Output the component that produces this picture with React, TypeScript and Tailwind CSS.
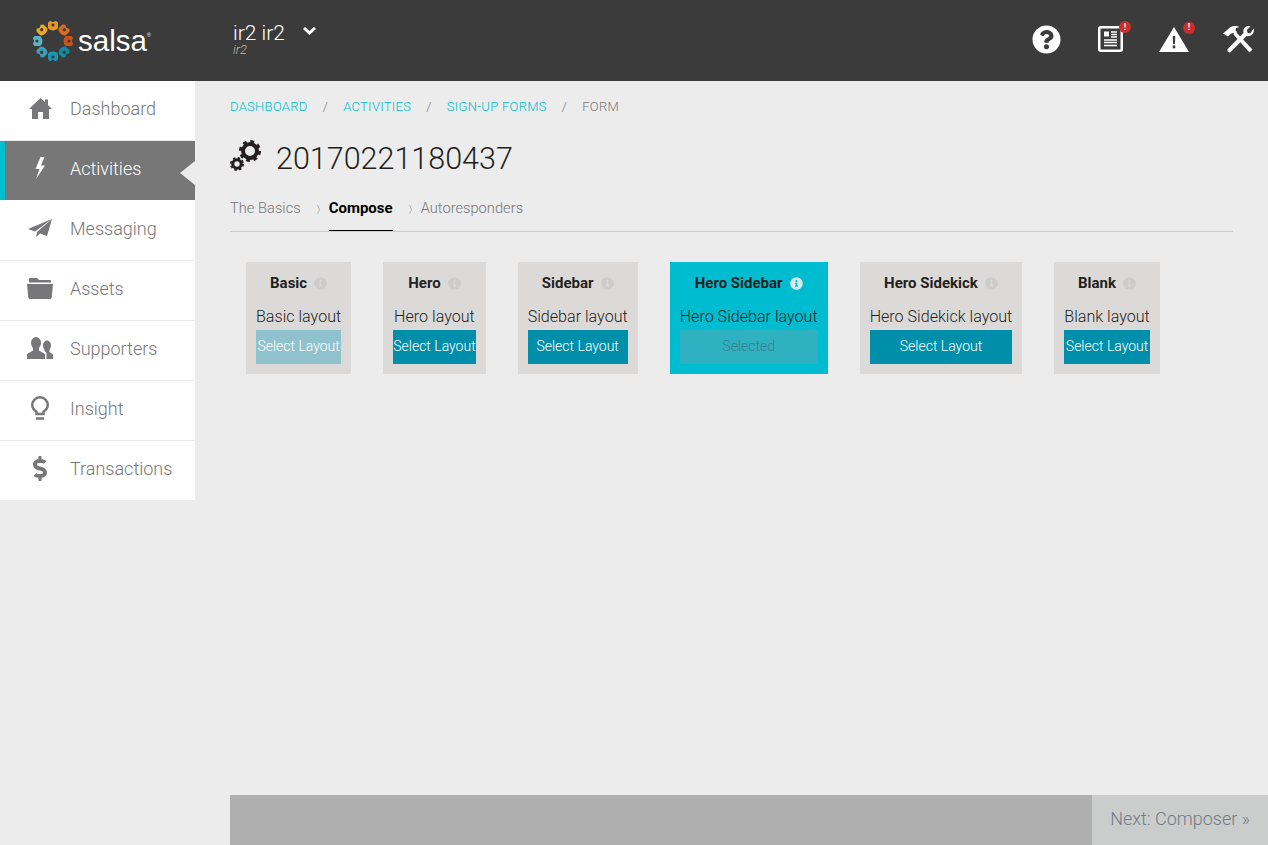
import { FaDollarSign, FaInfoCircle, FaQuestionCircle } from "react-icons/fa";
import { clsx } from "clsx";

function HomeIcon() {
  return (
    <svg viewBox="0 0 23 21" className="h-[21px] w-[23px]" fill="currentColor">
      <path d="M11.500 0 16 4V1.500h3V7l4 4h-3v10h-6v-7H9v7H3V11H0z" />
    </svg>
  );
}

function BoltIcon() {
  return (
    <svg viewBox="0 0 10 22" className="h-[22px] w-[10px]" fill="currentColor">
      <path d="M5.500 0 .5 12h4L1 22l9-13.500H6L9.500 0z" />
    </svg>
  );
}

function PlaneIcon() {
  return (
    <svg viewBox="0 0 24 18" className="h-[18px] w-[24px]" fill="currentColor">
      <path d="M24 0 0 10l7 2.500z" />
      <path d="M24 0 9 13l-1 5 4-3.500 7 2.500z" />
    </svg>
  );
}

function FolderIcon() {
  return (
    <svg viewBox="0 0 26 21" className="h-[21px] w-[26px]" fill="currentColor">
      <path d="M3 0h7l2 2h11c.6 0 1 .4 1 1v1.500H2V1c0-.6.400-1 1-1z" />
      <path d="M0 6h26l-1.300 13.500c-.1.900-.8 1.500-1.700 1.500H3c-.9 0-1.600-.6-1.700-1.500z" />
    </svg>
  );
}

function PeopleIcon() {
  return (
    <svg viewBox="0 0 26 22" className="h-[22px] w-[26px]" fill="currentColor">
      <ellipse cx="9" cy="6" rx="5" ry="6" />
      <path d="M0 22v-5l6-3.500V10h6v3.500l6 3.500v5z" />
      <ellipse cx="20" cy="8.500" rx="4" ry="5" />
      <path d="M19.500 22H26v-4.500L22.500 15v-3h-5v2l2 2z" />
    </svg>
  );
}

function BulbIcon() {
  return (
    <svg viewBox="0 0 18 24" className="h-[24px] w-[18px]" fill="none" stroke="currentColor" strokeWidth="2.500">
      <path d="M5.500 18v-2.200C3 14 1.250 12 1.250 9a7.750 7.750 0 0 1 15.500 0c0 3-1.750 5-4.250 6.800V18z" />
      <path d="M5 22.500h8" />
    </svg>
  );
}

function DollarIcon() {
  return <FaDollarSign className="h-[25px] w-[14px]" />;
}

function GearsIcon() {
  return (
    <svg viewBox="0 0 32 32" className="mr-[14px] -mt-[6px] h-[32px] w-[32px] shrink-0" fill="none" stroke="#231f20">
      <circle cx="20" cy="11" r="7" strokeWidth="4" />
      <circle cx="20" cy="11" r="9.600" strokeWidth="2.800" strokeDasharray="3.770 3.770" />
      <circle cx="7" cy="24" r="4.200" strokeWidth="3" />
      <circle cx="7" cy="24" r="6" strokeWidth="2" strokeDasharray="2.360 2.350" />
    </svg>
  );
}

function NewsIcon() {
  return (
    <svg viewBox="0 0 25 26" className="h-[26px] w-[25px]" fill="none">
      <rect x="1.250" y="1.250" width="22.500" height="23.500" rx="1.500" stroke="#fff" strokeWidth="2.500" />
      <rect x="6" y="5.500" width="5" height="5" fill="#fff" />
      <path d="M13 6h6M13 8.500h6M13 11h6M6 14h13M6 16.500h13M6 19.500h13" stroke="#fff" strokeWidth="1.300" />
    </svg>
  );
}

function WarningIcon() {
  return (
    <svg viewBox="0 0 30 25" className="h-[25px] w-[30px]">
      <path d="M15 0 30 25H0z" fill="#fff" />
      <path d="M13.700 9h2.600l-.4 8h-1.800z" fill="#3b3b3b" />
      <rect x="13.700" y="18.500" width="2.600" height="2.800" fill="#3b3b3b" />
    </svg>
  );
}

function ToolsIcon() {
  return (
    <svg viewBox="0 0 31 27" className="h-[27px] w-[31px]" fill="#fff">
      <path d="M0 7.500 7 1.500C10 -.2 14-.3 16.500 1L13 2l-.5 2.500L14 6l-2 2.500-1.500-1.500-2.500.5L5 10.500z" />
      <path d="M10.500 8.500 13 6l16.500 17.500-3 3z" />
      <path d="M30.500 2.500c.8 2.300.2 4.600-1.300 6.100s-3.700 2-5.700 1.500L8 25.800c-.8.800-2.200.8-3 0s-.8-2.200 0-3L20.500 7c-.5-2 0-4.200 1.500-5.700S25.500-.3 27.500.3L23.800 4l.8 2.700 2.700.8z" />
    </svg>
  );
}

function Badge({ className }: { className: string }) {
  return (
    <span className={clsx("absolute top-[-5px] flex h-[12px] w-[12px] items-center justify-center rounded-full bg-[#c9302c] text-[9px] font-bold leading-none text-[#eee]", className)}>
      !
    </span>
  );
}

function Logo() {
  const colors = ["#e9a82c", "#e8952a", "#d96d22", "#d2521e", "#178aa2", "#1a96b0", "#3ca0b8", "#59b5c6"];
  return (
    <svg viewBox="0 0 40 40" className="h-[40px] w-[40px] shrink-0">
      {colors.map((c, i) => (
        <g key={c} transform={`rotate(${-45 + i * 45} 20 20) translate(20 5)`}>
          <path d="M-5 -3.500-2.800-5.200 0-3.800 2.800-5.200 5-3.500V2c-2 3.200-8 3.200-10 0z" fill={c} />
          <circle cx="0" cy="-1" r="1.600" fill="#3b3b3b" />
        </g>
      ))}
    </svg>
  );
}

const nav = [
  { title: "Dashboard", icon: HomeIcon },
  { title: "Activities", icon: BoltIcon, active: true },
  { title: "Messaging", icon: PlaneIcon },
  { title: "Assets", icon: FolderIcon },
  { title: "Supporters", icon: PeopleIcon },
  { title: "Insight", icon: BulbIcon },
  { title: "Transactions", icon: DollarIcon },
];

const layouts = [
  { title: "Basic", text: "Basic layout", faded: true },
  { title: "Hero", text: "Hero layout" },
  { title: "Sidebar", text: "Sidebar layout" },
  { title: "Hero Sidebar", text: "Hero Sidebar layout", selected: true },
  { title: "Hero Sidekick", text: "Hero Sidekick layout" },
  { title: "Blank", text: "Blank layout" },
];

export default function App() {
  return (
    <div className="flex h-[845px] w-[1268px] flex-col overflow-hidden bg-[#ececec] font-['Roboto',sans-serif] font-light">
      <header className="flex h-[81px] shrink-0 bg-[#3b3b3b] text-white">
        <div className="flex w-[233px] items-center pl-[33px]">
          <Logo />
          <span className="ml-[5px] font-['Liberation_Sans',sans-serif] text-[29.500px] font-normal leading-none">
            salsa<sup className="align-super text-[5px]">®</sup>
          </span>
        </div>
        <div className="flex items-start pt-[21px]">
          <div className="flex flex-col">
            <span className="text-[21px] leading-[24px]">ir2 ir2</span>
            <span className="text-[13px] italic leading-[10px] text-[#b9b9b9]">ir2</span>
          </div>
          <svg viewBox="0 0 13 8" className="ml-[18px] mt-[6px] h-[8px] w-[13px]" fill="none" stroke="#fff" strokeWidth="3">
            <path d="M1 1l5.500 5L12 1" />
          </svg>
        </div>
        <div className="ml-auto flex items-center pb-[3px] pr-[14px]">
          <FaQuestionCircle className="h-[29px] w-[29px]" />
          <span className="relative ml-[37px]"><NewsIcon /><Badge className="right-[-8px]" /></span>
          <span className="relative ml-[36px]"><WarningIcon /><Badge className="right-[-6px]" /></span>
          <span className="ml-[34px]"><ToolsIcon /></span>
        </div>
      </header>

      <div className="flex min-h-0 flex-1">
        <aside className="w-[195px] shrink-0">
          {nav.map((item) => (
            <div
              key={item.title}
              className={clsx(
                "relative flex h-[60px] items-center border-b pb-[5px] text-[18px]",
                item.active ? "border-white bg-[#777778] text-white" : "border-[#ececec] bg-white text-[#77777a]"
              )}
            >
              {item.active && <span className="absolute inset-y-0 left-0 w-[5px] bg-[#00bcd0]" />}
              <span className="ml-[27px] flex w-[26px] justify-center">
                <item.icon />
              </span>
              <span className="ml-[17px]">{item.title}</span>
              {item.active && (
                <span className="absolute right-0 top-[20px] h-0 w-0 border-y-[12px] border-r-[15px] border-y-transparent border-r-[#ececec]" />
              )}
            </div>
          ))}
        </aside>

        <main className="flex min-w-0 flex-1 flex-col pl-[35px]">
          <div className="flex-1 pr-[35px]">
            <nav className="flex h-[51px] items-center text-[13px] uppercase tracking-[0.3px] text-[#00bcd0]">
              <span>Dashboard</span>
              <span className="mx-[15px] text-[#77777a]">/</span>
              <span>Activities</span>
              <span className="mx-[15px] text-[#77777a]">/</span>
              <span>Sign-up Forms</span>
              <span className="mx-[15px] text-[#77777a]">/</span>
              <span className="text-[#77777a]">Form</span>
            </nav>
            <h1 className="flex h-[54px] items-center text-[30.500px] font-light text-[#231f20]">
              <GearsIcon />
              20170221180437
            </h1>
            <div className="flex h-[46px] items-end border-b border-[#cccccc] text-[14.700px] leading-[22px] text-[#77777a]">
              <span className="pb-[12px]">The Basics</span>
              <span className="ml-[15px] pb-[10px] text-[10px] text-[#555560]">〉</span>
              <span className="ml-[3px] border-b border-black pb-[11px] text-[15px] font-bold text-black">Compose</span>
              <span className="ml-[15px] pb-[10px] text-[10px] text-[#555560]">〉</span>
              <span className="ml-[3px] pb-[12px]">Autoresponders</span>
            </div>
            <div className="mt-[30px] flex gap-[32px] pl-[16px]">
              {layouts.map((l) => (
                <div key={l.title} className={clsx("flex h-[112px] flex-col px-[10px]", l.selected ? "bg-[#00bcd0]" : "bg-[#dcdad9]")}>
                  <div className="flex h-[43px] items-center justify-center text-[15px] font-bold text-[#231f20]">
                    {l.title}
                    <FaInfoCircle className={clsx("ml-[7px] h-[13px] w-[13px]", l.selected ? "text-[#d6e6ea]" : "text-[#cccccc]")} />
                  </div>
                  <p className="h-[25px] whitespace-nowrap text-center text-[16.100px] leading-[24px] text-[#231f20]">{l.text}</p>
                  <button
                    className={clsx(
                      "h-[34px] whitespace-nowrap pb-[2px] text-center text-[14px]",
                      l.selected ? "bg-[#2fb1c1] text-[#357f8e]" : l.faded ? "bg-[#90c2ce] text-white" : "bg-[#008fab] text-white"
                    )}
                  >
                    {l.selected ? "Selected" : "Select Layout"}
                  </button>
                </div>
              ))}
            </div>
          </div>
          <footer className="flex h-[50px] shrink-0 justify-end bg-[#afafaf]">
            <div className="flex w-[176px] items-center justify-center bg-[#cbcdcc] pb-[3px] text-[18px] text-[#6f7a85]">Next: Composer »</div>
          </footer>
        </main>
      </div>
    </div>
  );
}
